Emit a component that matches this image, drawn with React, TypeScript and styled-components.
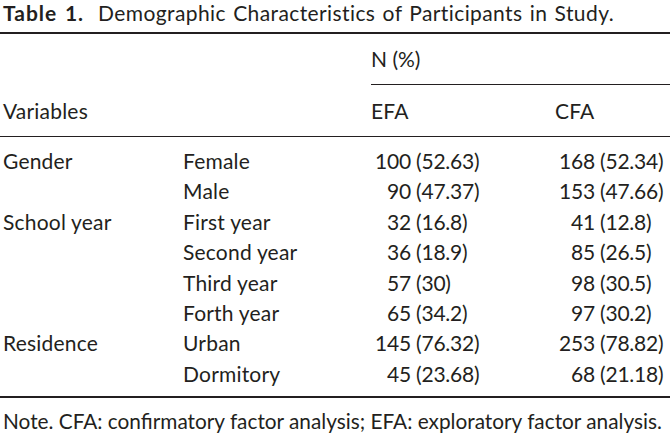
import React from "react";
import styled, { createGlobalStyle } from "styled-components";

const Global = createGlobalStyle`
  html, body { margin: 0; padding: 0; background: #ffffff; }
  body { font-family: "Lato", "Noto Sans", sans-serif; color: #231f20; }
`;

const Page = styled.div`
  width: 670px;
  height: 437px;
  overflow: hidden;
  font-size: 21px;
  line-height: 30px;
`;

const Caption = styled.div`
  height: 32px;
  padding-left: 3px;
  font-size: 21px;
  line-height: normal;
  letter-spacing: 0.4px;
  word-spacing: 1.5px;
  border-bottom: 2px solid #231f20;
  white-space: nowrap;
`;

const CaptionLabel = styled.span`
  font-weight: 700;
  letter-spacing: 1px;
  margin-right: 14px;
`;

const Grid = styled.div`
  display: grid;
  grid-template-columns: 180px 188px 184px 1fr;
  padding-left: 3px;
`;

const HeadTop = styled(Grid)`
  height: 51px;
  align-items: end;
`;

const Spanner = styled.div`
  grid-column: 3 / 5;
  border-bottom: 1px solid #231f20;
  padding-bottom: 10px;
  margin-right: -3px;
`;

const HeadBottom = styled(Grid)`
  height: 51px;
  align-items: end;
  border-bottom: 1px solid #231f20;
  & > div { padding-bottom: 10px; }
`;

const Body = styled.div`
  padding: 9px 0 7px;
  border-bottom: 2px solid #231f20;
`;

const Row = styled(Grid)`
  height: 30.4px;
  white-space: nowrap;
`;

const Cell = styled.div`
  letter-spacing: 0.2px;
`;

const Value = styled.div<{ $num: number }>`
  display: grid;
  grid-template-columns: ${(p) => p.$num}px auto;
  column-gap: 5px;
  letter-spacing: -0.2px;
  & > span:first-child { text-align: right; }
`;

const Note = styled.div`
  padding: 8px 0 0 3px;
  font-size: 20.8px;
  white-space: nowrap;
`;

type R = { v: string; s: string; e: [string, string]; c: [string, string] };

const rows: R[] = [
  { v: "Gender", s: "Female", e: ["100", "(52.63)"], c: ["168", "(52.34)"] },
  { v: "", s: "Male", e: ["90", "(47.37)"], c: ["153", "(47.66)"] },
  { v: "School year", s: "First year", e: ["32", "(16.8)"], c: ["41", "(12.8)"] },
  { v: "", s: "Second year", e: ["36", "(18.9)"], c: ["85", "(26.5)"] },
  { v: "", s: "Third year", e: ["57", "(30)"], c: ["98", "(30.5)"] },
  { v: "", s: "Forth year", e: ["65", "(34.2)"], c: ["97", "(30.2)"] },
  { v: "Residence", s: "Urban", e: ["145", "(76.32)"], c: ["253", "(78.82)"] },
  { v: "", s: "Dormitory", e: ["45", "(23.68)"], c: ["68", "(21.18)"] },
];

export default function App() {
  return (
    <Page>
      <Global />
      <Caption>
        <CaptionLabel>Table 1.</CaptionLabel>Demographic Characteristics of Participants in Study.
      </Caption>
      <HeadTop>
        <Cell />
        <Cell />
        <Spanner>N (%)</Spanner>
      </HeadTop>
      <HeadBottom>
        <Cell>Variables</Cell>
        <Cell />
        <Cell>EFA</Cell>
        <Cell>CFA</Cell>
      </HeadBottom>
      <Body>
        {rows.map((r, i) => (
          <Row key={i}>
            <Cell>{r.v}</Cell>
            <Cell>{r.s}</Cell>
            <Value $num={40}>
              <span>{r.e[0]}</span>
              <span>{r.e[1]}</span>
            </Value>
            <Value $num={40}>
              <span>{r.c[0]}</span>
              <span>{r.c[1]}</span>
            </Value>
          </Row>
        ))}
      </Body>
      <Note>Note. CFA: confirmatory factor analysis; EFA: exploratory factor analysis.</Note>
    </Page>
  );
}
